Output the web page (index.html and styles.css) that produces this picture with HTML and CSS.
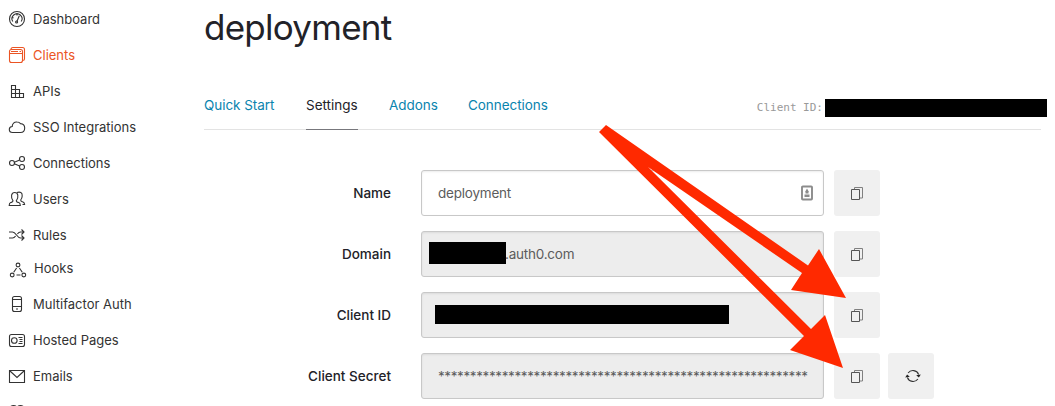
FILE: index.html
```html
<!DOCTYPE html>
<html lang="en">
<head>
<meta charset="utf-8">
<title>deployment</title>
<link rel="stylesheet" href="styles.css">
</head>
<body>
<svg class="defs" width="0" height="0" aria-hidden="true">
  <symbol id="copy" viewBox="0 0 14 14"><path class="back" d="M4.500 3V1.500h8v10.500H10"/><path d="M1.500 3.500h8v10h-8z"/></symbol>
</svg>
<div class="app">
  <nav class="sidebar">
    <a class="item"><svg class="icon" viewBox="0 0 18 18"><circle cx="9" cy="9" r="7.500"/><path d="M4.800 11.500a5 5 0 1 1 8.400 0M11.300 5.800L9 11.200M9 4v1.500M4.500 7.500l1 .5"/><circle cx="8.600" cy="12" r="1"/></svg><span>Dashboard</span></a>
    <a class="item active"><svg class="icon" viewBox="0 0 18 18"><rect x="1.500" y="3.500" width="13" height="13" rx="2"/><path d="M1.500 7.500h13M3 5.500h7M11.500 5.500h1.500M3 3.500C3 2 4 1.500 5 1.500h9.500c1.500 0 2 .5 2 2V13c0 1-.5 1.500-2 1.500"/></svg><span>Clients</span></a>
    <a class="item"><svg class="icon" viewBox="0 0 18 18"><path d="M3.500 3.500h4v12h-4zM3.500 7.500h8v8M3.500 11.500h12v4h-12"/></svg><span>APIs</span></a>
    <a class="item"><svg class="icon" viewBox="0 0 18 18"><path d="M4.500 14.500C2.500 14.500 1.300 13.300 1.300 11.500S2.500 8.600 4.200 8.500C4.200 5.500 6.300 3.800 9 4c1.500 0 2.600.5 3.500 1.600 2.700.2 4.200 1.900 4.200 4.400s-1.700 4.500-4.200 4.500z"/></svg><span>SSO Integrations</span></a>
    <a class="item"><svg class="icon" viewBox="0 0 18 18"><circle cx="4" cy="9" r="2.500"/><circle cx="14" cy="5" r="2.500"/><circle cx="14" cy="13" r="2.500"/><path d="M6.400 8.200l5.200-2.200M6.400 9.800l5.200 2.200"/></svg><span>Connections</span></a>
    <a class="item"><svg class="icon" viewBox="0 0 18 18"><path d="M5 10.800C3.500 9 3.300 7 3.600 5.200 4 3.300 5.100 2.500 6.700 2.500s2.800.8 3.100 2.700c.3 1.800 0 3.800-1.500 5.600.2 1.400 1 1.300 2.500 1.800 1 .4 1.500 1.200 1.500 2.900H1.200c0-1.700.5-2.500 1.500-2.900 1.500-.5 2.300-.4 2.300-1.800zM9 2.500c3-1 5.500 0 5.200 3.500-.1 1.800-.6 3-1.500 4 0 1.600.8 1.500 2.300 2 1 .4 1.500 1 1.600 2.500h-2.100"/></svg><span>Users</span></a>
    <a class="item"><svg class="icon" viewBox="0 0 18 18"><path d="M1 6h3.500c3.500 0 4.500 6 8 6H16M1 12h3.500c1.400 0 2.300-.9 3.100-2M9.400 8c.8-1.100 1.700-2 3.100-2H16M13.500 3.500L16 6l-2.500 2.500M13.500 9.500L16 12l-2.500 2.500"/></svg><span>Rules</span></a>
    <a class="item hooks"><svg class="icon" viewBox="0 0 18 18"><circle cx="9" cy="4" r="1.900"/><circle cx="3.200" cy="14" r="1.900"/><circle cx="14.800" cy="14" r="1.900"/><path d="M7.600 7L4.700 11.300M10.400 7l2.900 4.300M7.500 14h4"/></svg><span>Hooks</span></a>
    <a class="item"><svg class="icon" viewBox="0 0 18 18"><rect x="4.500" y="1.500" width="9" height="15" rx="2"/><path d="M4.500 4.500h9M4.500 11.500h9M8 14h2"/></svg><span>Multifactor Auth</span></a>
    <a class="item"><svg class="icon" viewBox="0 0 18 18"><rect x="1.500" y="3.500" width="15" height="12" rx="2"/><circle cx="6.300" cy="9.500" r="2.800"/><path d="M10.500 6.500h4M11.500 8.500h3M11.500 10.500h3M10.500 12.500h4"/></svg><span>Hosted Pages</span></a>
    <a class="item"><svg class="icon" viewBox="0 0 18 18"><path d="M1.500 3.500h15v12h-15zM2 4l7 6.500L16 4"/></svg><span>Emails</span></a>
    <a class="item"><svg class="icon" viewBox="0 0 18 18"><path d="M1.500 15V4.500C2.500 3.500 3.500 2.500 5.500 2.500S8.500 3.500 9 4.500c.5-1 1.500-2 3.500-2s3 1 4 2V15"/></svg></a>
  </nav>
  <main class="content">
    <h1>deployment</h1>
    <header class="tabs">
      <a class="tab t1">Quick Start</a>
      <a class="tab t2 current">Settings</a>
      <a class="tab t3">Addons</a>
      <a class="tab t4">Connections</a>
      <div class="client-id"><span>Client ID:</span><i class="redacted"></i></div>
    </header>
    <form class="form">
      <div class="row">
        <label>Name</label>
        <div class="field editable"><span>deployment</span><svg class="autofill" viewBox="0 0 12 16"><rect x="1" y="1.500" width="10" height="13" rx=".8"/><path d="M6 3.500L8 7H7.500v1.500h-3V7H4zM3.500 9.500h5V12h-5z"/></svg></div>
        <span class="button"><svg class="copy"><use href="#copy"/></svg></span>
      </div>
      <div class="row">
        <label>Domain</label>
        <div class="field domain"><i class="redacted"></i><span class="host">.auth0.com</span></div>
        <span class="button"><svg class="copy"><use href="#copy"/></svg></span>
      </div>
      <div class="row">
        <label>Client ID</label>
        <div class="field id"><i class="redacted"></i></div>
        <span class="button"><svg class="copy"><use href="#copy"/></svg></span>
      </div>
      <div class="row">
        <label class="wide">Client Secret</label>
        <div class="field"><span class="secret">**********************************************************</span></div>
        <span class="button"><svg class="copy"><use href="#copy"/></svg></span>
        <span class="button rotate"><svg class="refresh" viewBox="0 0 16 16"><path d="M3.100 5A6 6 0 0 1 13.600 6.500M12.900 11A6 6 0 0 1 2.400 9.500"/><path class="head" d="M11.200 7.300l4.600-.8-1.900 2.900zM.2 9.500l1.900-2.900 2.700 2.100z"/></svg></span>
      </div>
    </form>
  </main>
</div>
<svg class="arrows" viewBox="0 0 1055 406"><path d="M606 125L808 265.500 819 249 846 298 791 290 802 273 648 167 811 329 825 315 843 368 790 350 804 336 599 132z"/></svg>
</body>
</html>
```
FILE: styles.css
```css
* { box-sizing: border-box; }
body { margin: 0; width: 1055px; height: 406px; overflow: hidden; background: #fff; color: #222228; font: 13px/20px Inter, sans-serif; }
.defs { position: absolute; }
.app { display: flex; height: 406px; overflow: hidden; }
.sidebar { width: 204px; padding: 1px 0 0 8px; flex: none; }
.item { display: flex; align-items: center; height: 36px; gap: 7px; color: #333; }
.item span { padding-bottom: 1px; }
.item.active { color: #eb5424; }
.hooks { height: 33px; padding-left: 1px; }
.hooks span { padding-bottom: 3px; }
.icon { width: 18px; height: 18px; flex: none; fill: none; stroke: currentColor; stroke-width: 1.1; }
.content { width: 837px; flex: none; }
h1 { margin: 0; padding-top: 5px; height: 81px; font-size: 35px; line-height: 44px; font-weight: 400; letter-spacing: -.75px; }
.tabs { display: flex; height: 49px; border-bottom: 1px solid #e3e3e3; }
.tab { height: 49px; padding-top: 14px; color: #0a84ae; font-size: 13.500px; letter-spacing: -.05px; white-space: nowrap; }
.t1 { width: 71px; margin-right: 31px; }
.t2 { width: 52px; margin-right: 31px; letter-spacing: 0; }
.t3 { width: 48px; margin-right: 31px; }
.current { color: #222228; border-bottom: 1px solid #77777c; }
.client-id { display: flex; flex: none; margin: 18px -6px 0 auto; height: 18px; color: #999; font: 11px/18px "DejaVu Sans Mono", monospace; gap: 2px; white-space: nowrap; }
.redacted { display: block; background: #000; flex: none; }
.client-id .redacted { width: 222px; }
.form { padding-top: 40px; display: flex; flex-direction: column; gap: 15px; }
.row { display: flex; height: 46px; align-items: center; }
label { width: 187px; margin-right: 30px; text-align: right; font-size: 13.500px; font-weight: 500; }
.field { display: flex; align-items: center; width: 403px; height: 46px; padding: 0 16px; border: 1px solid #c8c8c8; border-radius: 3px; background: #ededed; box-shadow: inset 0 1px 2px rgba(0,0,0,.08); color: #5c5c5c; font-size: 13.500px; letter-spacing: -.22px; }
.editable { background: #fff; justify-content: space-between; padding-right: 10px; }
.autofill { width: 12px; height: 16px; fill: #8c8c8c; }
.autofill rect { fill: none; stroke: #8c8c8c; stroke-width: 1.900; }
.domain { padding-left: 7px; }
.domain .redacted { width: 77px; height: 22px; margin-top: -2px; }
.host { margin-left: -1px; }
.id { padding-left: 13px; }
.id .redacted { width: 294px; height: 19px; margin-top: -2px; }
.button { display: flex; align-items: center; justify-content: center; width: 46px; height: 46px; margin-left: 10px; border-radius: 3px; background: #f0f0f0; flex: none; }
.rotate { margin-left: 8px; }
.copy { width: 14px; height: 14px; fill: none; stroke: #555; stroke-width: 1; }
.back { stroke: #808080; }
.refresh { width: 16px; height: 16px; fill: none; stroke: #333; stroke-width: 1.100; margin-left: 3px; }
.head { fill: #222; stroke: none; }
.secret { letter-spacing: -.39px; }
.arrows { position: absolute; left: 0; top: 0; width: 1055px; height: 406px; fill: #ff2900; pointer-events: none; }
```
